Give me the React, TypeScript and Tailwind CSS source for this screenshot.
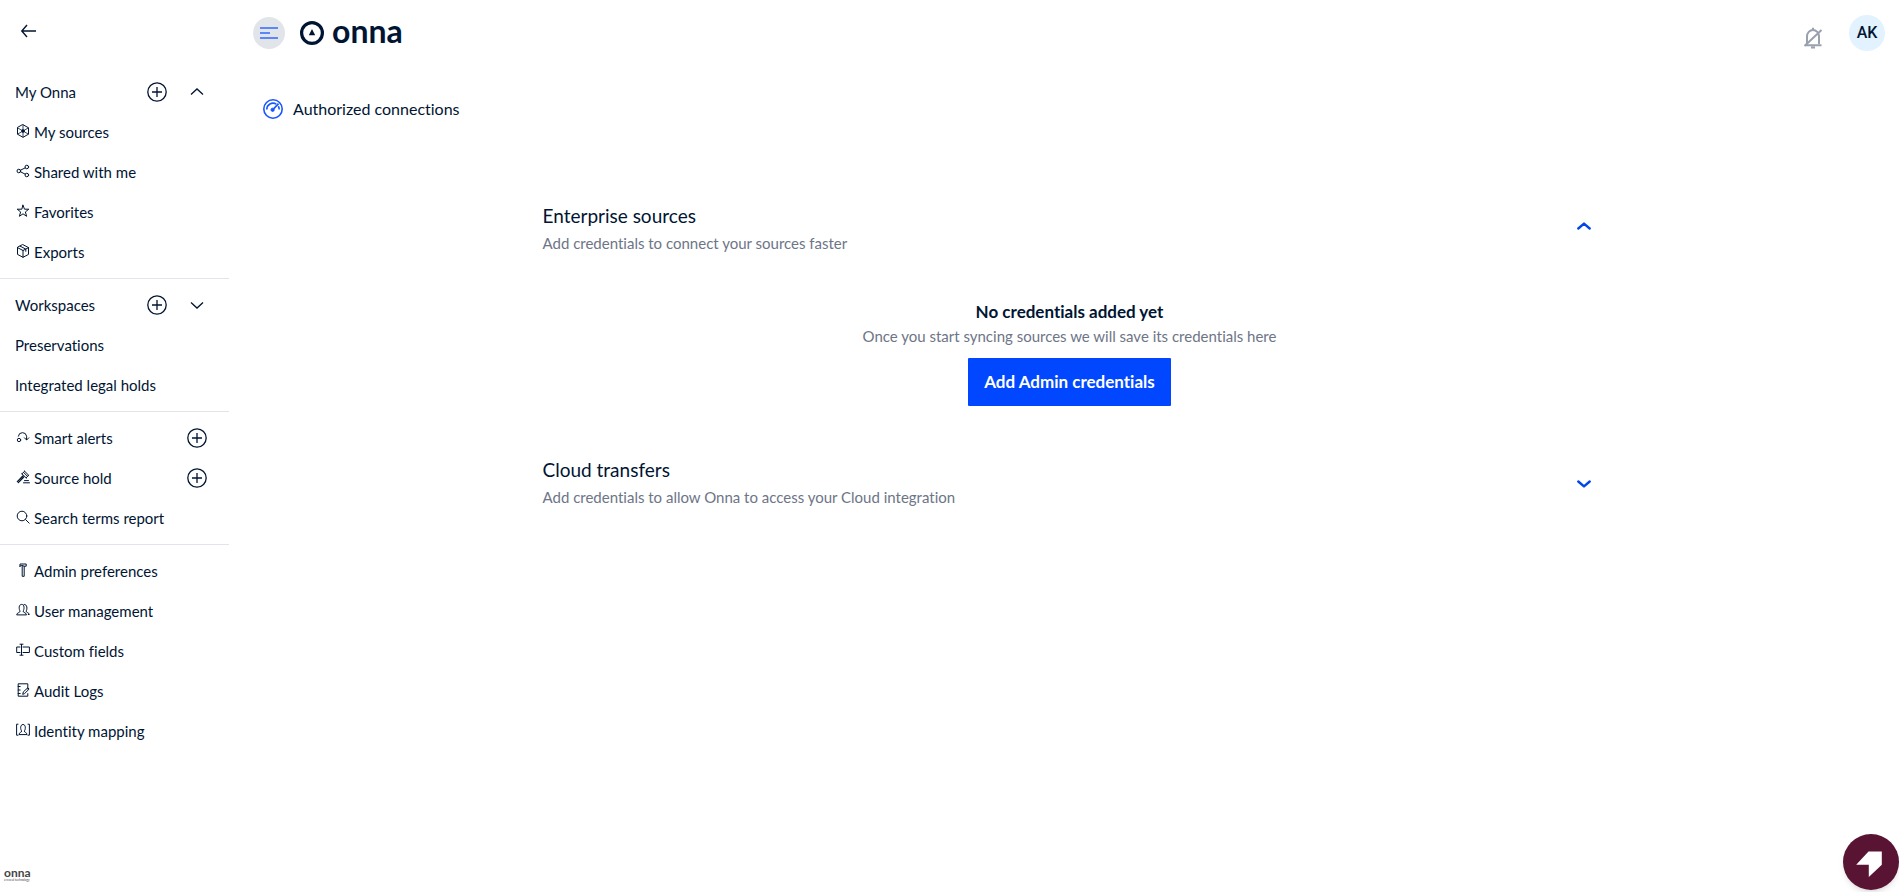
import type { ReactNode } from 'react'

type NavItem = {
  title: string
  icon?: ReactNode
  add?: boolean
  chevron?: 'up' | 'down'
}

function Glyph({ children }: { children: ReactNode }) {
  return (
    <svg
      viewBox="0 0 14 14"
      className="mr-1 -mt-0.5 ml-px h-3.5 w-3.5 shrink-0"
      fill="none"
      stroke="currentColor"
      strokeLinecap="round"
      strokeLinejoin="round"
      aria-hidden="true"
    >
      {children}
    </svg>
  )
}

const icons = {
  sources: (
    <Glyph>
      <path d="M7 .7 12.5 3.8v6.4L7 13.3 1.5 10.2V3.8Z" />
      <path d="M7 1v12M1.8 4l10.4 6M12.2 4 1.8 10" strokeWidth=".8" />
      <circle cx="7" cy="7" r="1.3" fill="currentColor" />
    </Glyph>
  ),
  share: (
    <Glyph>
      <circle cx="2.8" cy="7" r="1.8" />
      <circle cx="10.8" cy="3" r="1.8" />
      <circle cx="10.8" cy="11" r="1.8" />
      <path d="M4.5 6.2 9.1 3.9M4.500 7.800l4.600 2.300" />
    </Glyph>
  ),
  star: (
    <Glyph>
      <path d="m7 1.2 1.5 4h4.3L9.4 7.9l1.2 4.4L7 9.8l-3.6 2.5 1.2-4.4L1.2 5.2h4.3Z" />
    </Glyph>
  ),
  box: (
    <Glyph>
      <path d="M7 .7 12.5 3.6v6.8L7 13.3 1.5 10.4V3.6ZM1.5 3.6 7 6.5l5.5-2.9M7 6.5v6.8M4.2 2.2l5.6 2.9v2.2" />
    </Glyph>
  ),
  alert: (
    <Glyph>
      <circle cx="3" cy="10" r="1.7" />
      <path d="M2.3 6.2a4.2 4.2 0 0 1 8.3 0v3.6M8.4 7.8l2.2 2.2 2.2-2.2" />
    </Glyph>
  ),
  gavel: (
    <Glyph>
      <path d="m6 3.8 2.6-2.6M8.4 1l4.2 4.2M10.2 7.8l2.4-2.6M5.7 3.6l4.7 4.5M7.6 2.4l3.8 3.8" />
      <path d="m6.8 6-5.5 5.6M7.8 7l-5.5 5.6" strokeWidth="1.2" />
      <path d="M8.5 10.6h4M7.5 12.8h6" />
    </Glyph>
  ),
  search: (
    <Glyph>
      <circle cx="6" cy="6" r="4.8" />
      <path d="m9.6 9.6 3.6 3.6" />
    </Glyph>
  ),
  hammer: (
    <Glyph>
      <path d="M4 3.2V1h6.2v2.2H8.4L5.8 2.4 4 3.2ZM6.2 3.4v9.9h2V3.4" />
    </Glyph>
  ),
  users: (
    <Glyph>
      <path d="M.7 11.5c0-2 3.400-1.600 3.400-3.400C2.900 6.600 2.400 1.400 5.600 1.400S8.300 6.600 7.100 8.100c0 1.800 3.400 1.400 3.400 3.400Z" />
      <path d="M8 1.500c3.400-.7 3.500 4.900 2.100 6.600 0 1.700 3.200 1.500 3.200 3.400h-1" />
    </Glyph>
  ),
  field: (
    <Glyph>
      <path d="M4 4H.7v5.500H4M7 4h6.400v5.500H7M5.500 1.500v10.500M4 1.200h3M4 12.200h3" />
    </Glyph>
  ),
  audit: (
    <Glyph>
      <path d="M11.800 6V.8H2.200v12.400h9.600v-2.600M2.200 3.500h2M2.200 7h2M2.200 10.500h2" />
      <path d="m6.800 11 .6-2.200 4.400-4 1.300 1.300-4.200 4.200Z" />
    </Glyph>
  ),
  identity: (
    <Glyph>
      <path d="M2 1.200H.6v11H2M12 1.200h1.400v11H12" />
      <path d="M3 11.200c0-2 2.700-1.500 2.700-3.200C4.300 6.500 4 1.500 7 1.500S9.700 6.500 8.300 8c0 1.700 2.700 1.200 2.700 3.200Z" />
    </Glyph>
  ),
}

const groups: NavItem[][] = [
  [
    { title: 'My Onna', add: true, chevron: 'up' },
    { title: 'My sources', icon: icons.sources },
    { title: 'Shared with me', icon: icons.share },
    { title: 'Favorites', icon: icons.star },
    { title: 'Exports', icon: icons.box },
  ],
  [
    { title: 'Workspaces', add: true, chevron: 'down' },
    { title: 'Preservations' },
    { title: 'Integrated legal holds' },
  ],
  [
    { title: 'Smart alerts', icon: icons.alert, add: true },
    { title: 'Source hold', icon: icons.gavel, add: true },
    { title: 'Search terms report', icon: icons.search },
  ],
  [
    { title: 'Admin preferences', icon: icons.hammer },
    { title: 'User management', icon: icons.users },
    { title: 'Custom fields', icon: icons.field },
    { title: 'Audit Logs', icon: icons.audit },
    { title: 'Identity mapping', icon: icons.identity },
  ],
]

function NavRow({ item }: { item: NavItem }) {
  return (
    <li className="flex h-10 items-center pr-5">
      <a href="#" className="flex flex-1 items-center whitespace-nowrap">
        {item.icon}
        {item.title}
      </a>
      {item.add && (
        <button type="button" aria-label={`Add to ${item.title}`} className="flex w-6 justify-center">
          <svg viewBox="0 0 20 20" className="h-5 w-5" fill="none" stroke="currentColor" strokeWidth="1.3">
            <circle cx="10" cy="10" r="9.2" />
            <path d="M10 5v10M5 10h10" />
          </svg>
        </button>
      )}
      {item.chevron && (
        <button type="button" aria-label={`Toggle ${item.title}`} className="ml-4 flex w-6 justify-center">
          <svg viewBox="0 0 14 8" className="h-2 w-3.5" fill="none" stroke="currentColor" strokeWidth="1.3">
            <path d={item.chevron === 'up' ? 'M1 6.5 7 1l6 5.5' : 'M1 1.5 7 7l6-5.5'} />
          </svg>
        </button>
      )}
    </li>
  )
}

function Sidebar() {
  return (
    <aside className="flex w-60 shrink-0 flex-col">
      <div className="h-[72px] px-5 pt-[23px]">
        <button type="button" aria-label="Back" className="block">
          <svg viewBox="0 0 16 16" className="h-4 w-4" fill="none" stroke="currentColor" strokeWidth="1.4">
            <path d="M16 8H2M7 2 1.8 8 7 14" />
          </svg>
        </button>
      </div>
      <nav className="mr-[11px] text-[15px] leading-5">
        {groups.map((group, index) => (
          <ul
            key={group[0].title}
            className={index > 0 ? 'mt-1.5 border-t border-[#e1e4e9] pt-1.5 pl-[15px]' : 'pl-[15px]'}
          >
            {group.map((item) => (
              <NavRow key={item.title} item={item} />
            ))}
          </ul>
        ))}
      </nav>
      <div className="mt-auto flex flex-col px-1 pb-2.5 text-[#444]">
        <span className="text-[12px] leading-3 font-bold">onna</span>
        <span className="text-[3px] leading-[3px]">a reveal technology</span>
      </div>
    </aside>
  )
}

function Header() {
  return (
    <header className="flex items-start justify-between pr-3.5 pl-[13px]">
      <div className="flex h-[66px] items-center">
        <button
          type="button"
          aria-label="Menu"
          className="flex h-8 w-8 items-center justify-center rounded-full bg-[#e1e4e9]"
        >
          <svg viewBox="0 0 18 12" className="h-3 w-[18px]" stroke="#2f68ff" strokeWidth="1.6">
            <path d="M0 1h18M0 6h10M0 11h18" />
          </svg>
        </button>
        <a href="#" className="ml-[15px] flex items-center gap-2" aria-label="onna">
          <svg viewBox="0 0 24 24" className="h-6 w-6" aria-hidden="true">
            <circle cx="12" cy="12" r="10.4" fill="none" stroke="#001533" strokeWidth="3.2" />
            <path d="m12 8 3.2 6.3H8.8Z" fill="#001533" />
          </svg>
          <span className="-mt-1 text-[32px] leading-8 font-bold">onna</span>
        </a>
      </div>
      <div className="flex items-start pt-[15px]">
        <button type="button" aria-label="Notifications off" className="mt-3 mr-[26px]">
          <svg viewBox="0 0 20 22" className="h-[22px] w-5" fill="none" stroke="#9aa1ae" strokeWidth="2">
            <path d="M4 17V9.5a6 6.5 0 0 1 12 0V17M1.5 18.200h17M8 20.500h4M10 .8V3M1.500 19 18.500 3" />
          </svg>
        </button>
        <button
          type="button"
          className="h-9 w-9 rounded-full bg-[#e3f2ff] font-[Roboto,sans-serif] text-[16px] leading-9 font-medium"
        >
          AK
        </button>
      </div>
    </header>
  )
}

function SectionChevron({ up }: { up?: boolean }) {
  return (
    <svg
      viewBox="0 0 14 8"
      className="h-2 w-3.5"
      fill="none"
      stroke="#0047e8"
      strokeWidth="2.4"
      strokeLinecap="round"
      strokeLinejoin="round"
      aria-hidden="true"
    >
      <path d={up ? 'M1.3 6.5 7 1.6l5.700 4.900' : 'M1.3 1.500 7 6.400l5.700-4.900'} />
    </svg>
  )
}

export default function App() {
  return (
    <div className="flex min-h-screen bg-white font-[Lato,sans-serif] text-[#001533] [font-variant-ligatures:none]">
      <Sidebar />
      <main className="min-w-0 flex-1">
        <Header />
        <h1 className="flex items-center pt-[31px] pl-[23px] text-[16px] leading-6">
          <svg viewBox="0 0 20 20" className="mr-2.5 h-5 w-5" fill="none" stroke="#1757ff" aria-hidden="true">
            <circle cx="10" cy="10" r="9.2" strokeWidth="1.6" />
            <path d="M3.8 10.5a6.2 6.2 0 0 1 9.5-5.4M15.3 7.2a6.2 6.2 0 0 1 .9 3.3" strokeWidth="1.6" />
            <path d="m10 10.5 5.5-5.8" strokeWidth="1.8" />
            <circle cx="9.6" cy="10.8" r="1.6" fill="#1757ff" />
          </svg>
          Authorized connections
        </h1>
        <div className="mx-auto mt-20 max-w-[1054px]">
          <section>
            <div className="flex items-center justify-between">
              <div>
                <h2 className="text-[19px] leading-[30px]">Enterprise sources</h2>
                <p className="text-[15px] leading-6 text-[#6d7587]">Add credentials to connect your sources faster</p>
              </div>
              <button type="button" aria-label="Collapse Enterprise sources" className="mr-1.5 pb-1">
                <SectionChevron up />
              </button>
            </div>
            <div className="mt-[45px] flex flex-col items-center">
              <h3 className="text-[17px] leading-6 font-bold">No credentials added yet</h3>
              <p className="text-[15px] leading-6 text-[#6d7587]">
                Once you start syncing sources we will save its credentials here
              </p>
              <button
                type="button"
                className="mt-2.5 h-12 rounded-[1px] bg-[#0047ff] px-4 text-[17px] leading-6 font-bold text-white"
              >
                Add Admin credentials
              </button>
            </div>
          </section>
          <section className="mt-[49px] flex items-center justify-between">
            <div>
              <h2 className="text-[19px] leading-[30px]">Cloud transfers</h2>
              <p className="text-[15px] leading-6 text-[#6d7587]">
                Add credentials to allow Onna to access your Cloud integration
              </p>
            </div>
            <button type="button" aria-label="Expand Cloud transfers" className="mr-1.5 pt-1">
              <SectionChevron />
            </button>
          </section>
        </div>
      </main>
      <button
        type="button"
        aria-label="Open assistant"
        className="fixed right-0 bottom-0.5 h-14 w-14 rounded-full bg-[#5a1433] shadow-md"
      >
        <svg viewBox="0 0 56 56" fill="#fff" aria-hidden="true">
          <path d="M25.5 17.5h13.3v13.2L25.8 43V30.7H13.2Z" />
        </svg>
      </button>
    </div>
  )
}
